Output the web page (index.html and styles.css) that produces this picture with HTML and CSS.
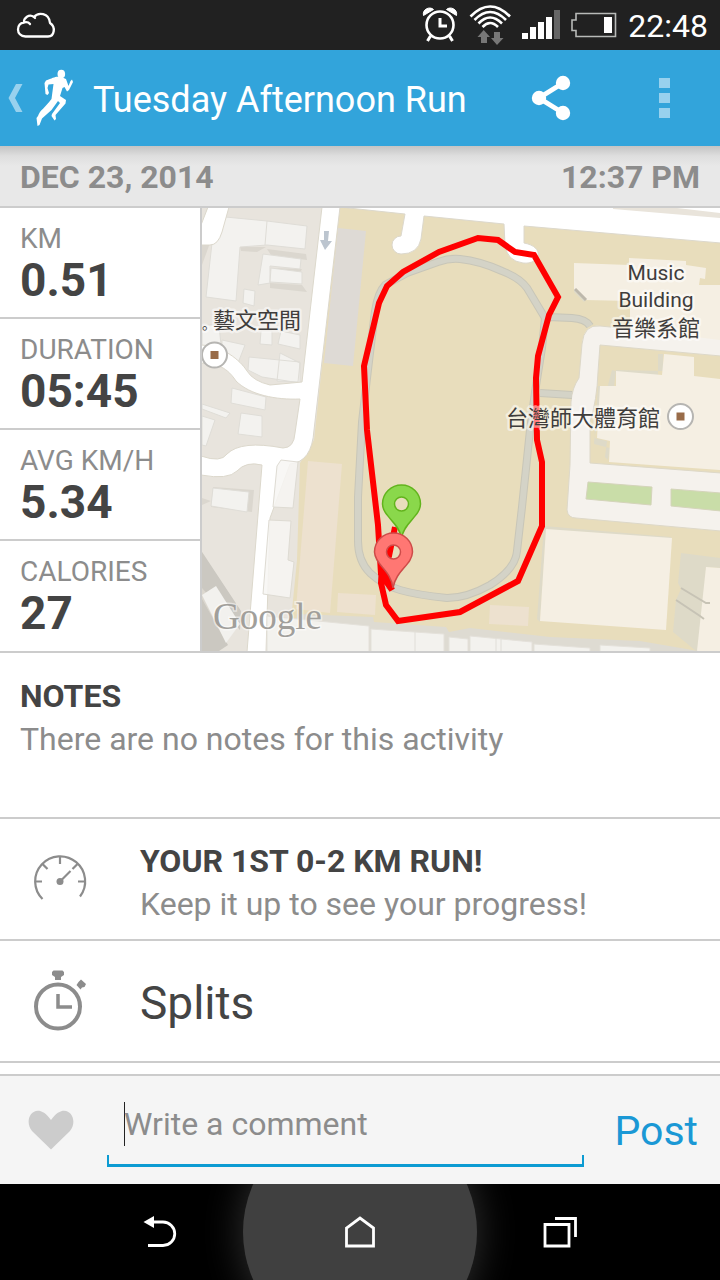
FILE: index.html
```html
<!DOCTYPE html>
<html lang="en">
<head>
<meta charset="utf-8">
<meta name="viewport" content="width=device-width, initial-scale=1">
<title>Tuesday Afternoon Run</title>
<link rel="stylesheet" href="styles.css">
</head>
<body>
<div class="screen">
  <div class="status">
    <svg class="status-cloud" width="40" height="28" viewBox="16 11 40 28" fill="none" stroke="#fff" stroke-width="2.3" stroke-linecap="round" stroke-linejoin="round"><path d="M25.500 36.500C20.500 36.500 18 33 18 29.500C18 25.500 20.500 22.800 24 22.500C23.500 18 29 13.500 34 17C38 12 49 12.500 50 23C56 27 54.500 36.500 48 36.500ZM24 22.500Q28 21.500 30 24M34 17L35 18"/></svg>
    <div class="status-icons">
      <svg width="36" height="38" viewBox="422 6 36 38" fill="none" stroke="#fff"><circle cx="440" cy="25" r="13.500" stroke-width="2.600"/><path d="M440 18V26H447" stroke-width="3"/><path d="M430.500 36L427.500 41M449.500 36L452.500 41" stroke-width="3"/><path d="M423.500 15.500C422 9 430 6 433.500 9.500ZM456.500 15.500C458 9 450 6 446.500 9.500Z" fill="#fff" stroke-width="1"/></svg>
      <svg width="42" height="42" viewBox="468 4 42 42" fill="none" stroke="#fff" stroke-width="2.600"><path d="M469.500 16.500Q489 -3.500 509 16.500M473.500 20Q489 4 505 20M477.500 23.500Q489 11.500 501 23.500M481.500 27Q489 19 497 27"/><path d="M482.700 30L489 37H486V43H480V37H476.500ZM496 45L502.500 38H499V32H493V38H490Z" fill="#777" stroke="none"/></svg>
      <svg width="38" height="30" viewBox="521 12 38 30" fill="#fff"><path d="M521 35H527V41H521ZM529 29H535V41H529ZM537 24H543V41H537ZM545 19H551V41H545Z"/><path d="M553 12H559V41H553Z" fill="#666"/></svg>
      <svg class="status-battery" width="46" height="26" viewBox="572 12 46 26"><path d="M577 13.500H616.500V36.500H577V30.500H573V20H577Z" fill="none" stroke="#b8bab8" stroke-width="1.600"/><path d="M605 17H613V33H605Z" fill="#fff"/></svg>
      <span class="clock">22:48</span>
    </div>
  </div>

  <header class="appbar">
    <button class="up" aria-label="Back">
      <svg width="66" height="60" viewBox="8 68 66 60"><path d="M16 84H22.500L15 98L22.500 112H16L8.500 98Z" fill="#98d1ee"/><g fill="#fff"><ellipse cx="61.300" cy="74" rx="3.800" ry="4.300"/><path d="M59 77C56 76 53 78 46 80.500L44.500 83L45.500 94L47.500 95L49 93L47.500 88L48.500 84.500L53.500 84L51.500 99C45 108 40 110 38 116L36.500 118L37.500 126L39.500 125L42 118.500L51.500 110L58 101L60 103L52 114L51.500 116L54.500 120.500L56 119L55.500 115L65.500 103.500L66 100L60 96L62.500 88L64.500 87L67 91.500L69 90L73 82L72 79.500L70.500 81L68.500 86L66 79L62.500 77.500Z"/></g></svg>
    </button>
    <h1 class="title">Tuesday Afternoon Run</h1>
    <button class="action" aria-label="Share">
      <svg width="40" height="46" viewBox="531 75 40 46" fill="#fff"><path d="M563 83L539 98L563 113" fill="none" stroke="#fff" stroke-width="5"/><circle cx="563" cy="83" r="7.200"/><circle cx="539" cy="98" r="7.200"/><circle cx="563" cy="113" r="7.200"/></svg>
    </button>
    <button class="action more" aria-label="More options"><span></span><span></span><span></span></button>
  </header>

  <main class="content">
    <div class="datebar"><span>DEC 23, 2014</span><span>12:37 PM</span></div>

    <section class="overview">
      <dl class="stats">
        <div class="stat"><dt>KM</dt><dd>0.51</dd></div>
        <div class="stat"><dt>DURATION</dt><dd>05:45</dd></div>
        <div class="stat"><dt>AVG KM/H</dt><dd>5.34</dd></div>
        <div class="stat"><dt>CALORIES</dt><dd>27</dd></div>
      </dl>
      <svg class="map" viewBox="202 208 518 443" preserveAspectRatio="xMidYMid slice" role="img" aria-label="Route map">
        <rect x="202" y="208" width="518" height="443" fill="#e8e4dd"/>
        <!-- campus ground -->
        <path d="M339 208H720V651H370L290 630L297 560L300 463L314 440Z" fill="#e8ddbc"/>
        <path d="M338 228L366 231L353 366L324 363Z" fill="#dedad5"/>
        <path d="M308 461L342 464L330 613L296 609Z" fill="#ede1cf"/>
        <path d="M338 593L376 595L375 615L337 612ZM490 605L529 607L528 626L489 624Z" fill="#ede1cf"/>
        <!-- blocks on the west side -->
        <g fill="#dbd7cf">
          <path d="M202 243L210 243L202 265Z"/>
          <path d="M240 247L266 247L257 252L241 251ZM267 249L306 254L307 260L271 255ZM270 283L302 285L307 292L270 288ZM272 268L302 269L300 273L270 271Z"/>
          <path d="M213 487L254 490L252 512L211 507ZM202 498L211 501L202 505ZM202 552L240 610L241 622L226 642L202 612Z"/>
        </g>
        <path d="M202 552L241 611L240 630L202 588ZM202 599L228 645L219 651H202Z" fill="#cbc8c1"/>
        <g fill="#f3f2ef" stroke="#dfddd7" stroke-width="1">
          <path d="M215 216L267 221L307 226L305 249L267 245L240 247L236 301L206 297Z"/>
          <path d="M267 221L265 245M263 254L301 259L300 269L270 266V283L258 285Z"/>
          <path d="M271 268L302 272V284L270 282ZM244 289L255 291L254 306L243 303Z"/>
          <path d="M202 325H219L222 355L202 351ZM222 340L245 345L238 363L222 353ZM261 331H272V345L260 344ZM281 331L300 335V349L278 344Z"/>
          <path d="M249 357L300 362V383L262 377L248 370ZM280 353L300 363L298 382L277 381Z"/>
          <path d="M232 388L266 397L265 410L231 403ZM202 404L230 413L226 418L202 409ZM241 413L262 416V437L238 434ZM202 416L215 420L206 446L202 445Z"/>
          <path d="M213 488L249 492L247 512L211 506Z"/>
        </g>
        <path d="M202 595L216 586L240 624L226 643Z" fill="#f2f1ee"/>
        <!-- streets -->
        <g fill="#fff" stroke="#dcd8cc" stroke-width="1">
          <path d="M208 207H229L222 232Q218 245 210 245H201V225Z"/>
          <path d="M322 207H340L314 430Q312 462 290 464L270 518L266 652H247L262 465Q246 461 237 471Q228 480 201 475V456Q221 463 227 454Q241 440 283 448Q294 448 295 433L300 399C276 400 250 395 236 381C225 364 213 364 201 363V345C223 346 240 360 247 371Q253 381 270 385L302 382Z"/>
          <path d="M339 207H721V243L524 226V243C546 247 540 265 523 263Q507 261 505 245L504 224L424 216L421 239Q418 254 401 254A9 9 0 0 1 401 236L405 214Z"/>
        </g>
        <path d="M613 208H677L720 213V218L613 209Z" fill="#e9e4db"/>
        <g fill="#f7f6f3" fill-opacity=".85" stroke="#dedbd3">
          <path d="M281 460L298 462L293 508L273 507L277 466ZM269 520L291 521L288 560L294 562L290 598L263 594Z"/>
        </g>
        <g fill="#f5f2ed" stroke="#ddd8c8">
          <path d="M721 338L600 326Q584 324 582 344L579 378Q572 388 571 402L570 465L567 510Q568 518 576 518L721 531V473L590 463V422Q597 400 598 372L600 345L721 356Z"/>
        </g>
        <path d="M588 482L652 487L651 505L586 499ZM671 489L721 493V511L671 506Z" fill="#c9dda8" stroke="#d4d4ba"/>
        <!-- campus buildings -->
        <g fill="#dedac8">
          <path d="M574 289L586 300L584 302L574 292ZM612 370L616 371V391L658 396V354L663 354V371L616 370L614 386L598 386L594 444L610 448L608 460L605 457L607 441L594 438ZM544 526L671 537V541L546 532L540 622L537 619ZM681 553L721 558V568L706 567L704 651H696L673 632L676 600L681 589L678 583Z"/>
        </g>
        <g fill="#f5efe3">
          <path d="M574 263L629 265V258L686 261V265L706 268L705 279L700 278L699 285H721V340L630 329V301L585 300L574 290Z"/>
          <path d="M616 371L662 375L664 354L694 357V376L721 379V470L609 462L610 441L597 438L600 386H616Z"/>
          <path d="M546 529L672 538L666 630L540 621Z"/>
          <path d="M706 567L721 568V651H697Z"/>
        </g>
        <path d="M575 289L586 300" stroke="#bdb8ac" stroke-width="3"/>
        <path d="M681 588L706 603L710 603M676 600L700 616L704 619" fill="none" stroke="#c7c3b5" stroke-width="2"/>
        <!-- south row -->
        <path d="M297 614L373 617L374 622L446 627L449 632L470 628L550 637L640 641L698 651H292Z" fill="#dedbd2"/>
        <path d="M267 616L369 626V652H267ZM371 629L444 634V652H371ZM449 637L468 639V652H449ZM470 636L532 642V652H470ZM534 644L590 648V652H534ZM600 645L650 648V652H600Z" fill="#f3f2ee" stroke="#e4e1da"/>
        <path d="M415 632V651M496 638V651M501 639V651" stroke="#e0ded8"/>
        <!-- running track -->
        <path id="track" class="track-edge" d="M460 259Q449 258 438 262L407 273L385 285Q378 292 375 311L367 378L362 422L358 497V541C358 554 362 565 370 573Q383 585 400 590T447 598Q467 598 490 585C506 575 516 564 517 551L522 507L530 430L535 392L542 348L545 318L527 288Q520 278 502 271Q480 261 460 259ZM548 317L572 318Q586 319 590 326M540 393L572 395"/>
        <path class="track-fill" d="M460 259Q449 258 438 262L407 273L385 285Q378 292 375 311L367 378L362 422L358 497V541C358 554 362 565 370 573Q383 585 400 590T447 598Q467 598 490 585C506 575 516 564 517 551L522 507L530 430L535 392L542 348L545 318L527 288Q520 278 502 271Q480 261 460 259ZM548 317L572 318Q586 319 590 326M540 393L572 395"/>
        <path d="M324 231H329L328 241H332L325 250L320 240H324Z" fill="#bcc5cf"/>
        <!-- recorded route -->
        <path d="M395 527L389 556L382 566L392 590L381 574L378 525L367 430L364 366L379 303L387 286L403 272L439 252L478 238L498 240L515 252L534 255L558 297L549 315L538 356L536 378L537 440L542 462V526L518 581L460 612L398 621L386 605L381 583L382 566" fill="none" stroke="#f00" stroke-width="6"/>
        <!-- places -->
        <g fill="#fff" stroke="#b6b5b2" stroke-width="2"><circle cx="214.500" cy="355" r="12.500"/><circle cx="680.500" cy="416.500" r="12.500"/></g>
        <path d="M210.500 351H218.500V359H210.500ZM676.500 412.500H684.500V420.500H676.500Z" fill="#996c49"/>
        <g class="place">
          <text class="stop" x="202" y="329" lang="ja">。</text>
          <text x="213" y="328">藝文空間</text>
          <text class="latin" x="656" y="280" text-anchor="middle">Music</text>
          <text class="latin" x="656" y="307" text-anchor="middle">Building</text>
          <text x="656" y="336" text-anchor="middle">音樂系館</text>
          <text x="506" y="426">台灣師大體育館</text>
        </g>
        <text class="credit" x="213" y="629">Google</text>
        <!-- start and finish pins -->
        <path d="M401.500 538C399 522 383 517 382.500 504A19 19 0 0 1 420.500 504C420 517 404 522 401.500 538ZM401.500 497A7 7 0 1 0 401.500 511A7 7 0 1 0 401.500 497Z" fill="#8ad84b" stroke="#62b41d" stroke-width="1.500"/>
        <path d="M393 588C391 570 375 565 374.500 552A19 19 0 0 1 412.500 552C412 565 396 570 393 588ZM393.500 545A7 7 0 1 0 393.500 559A7 7 0 1 0 393.500 545Z" fill="#ff7773" stroke="#ce4b49" stroke-width="1.500"/>
      </svg>
    </section>

    <section class="notes">
      <h2>NOTES</h2>
      <p>There are no notes for this activity</p>
    </section>

    <section class="row">
      <svg class="row-icon" width="56" height="64" viewBox="32 848 56 64" fill="none" stroke="#8c8c8c" stroke-width="2.200"><path d="M42.500 900A25 25 0 1 1 80 897.500"/><path d="M35 882.500H42M78 882.500H85M60 857.500V865M42.500 865L47.500 870M77.500 865L72.500 870"/><path d="M60 882.500L70.500 872"/><circle cx="60" cy="882.500" r="3.500" fill="#8c8c8c" stroke="none"/></svg>
      <div class="progress"><h2>YOUR 1ST 0-2 KM RUN!</h2><p>Keep it up to see your progress!</p></div>
    </section>

    <section class="row">
      <svg class="row-icon" width="56" height="64" viewBox="32 969 56 64" fill="none" stroke="#8c8c8c"><circle cx="58" cy="1006.500" r="22" stroke-width="4"/><path d="M58 994V1007H72" stroke-width="3.500"/><path d="M53.500 970.500H62.500L64 972V975L61 977V980H55V977L52 975V972ZM76.500 985L80.500 989.500L82 987.500L84.500 987L86 984L81 979.500L78.500 982Z" fill="#8c8c8c" stroke="none"/></svg>
      <div class="splits">Splits</div>
    </section>
  </main>

  <form class="comment">
    <button type="button" class="like" aria-label="Like"><svg width="48" height="42" viewBox="27 1108 48 42"><path d="M51 1148.500L32 1130C22 1118 36 1098 51 1119C66 1098 80 1118 70 1130Z" fill="#ccc"/></svg></button>
    <div class="field"><input type="text" placeholder="Write a comment" aria-label="Write a comment"></div>
    <button type="button" class="post">Post</button>
  </form>

  <nav class="navbar">
    <button aria-label="Back"><svg width="36" height="36" viewBox="142 1214 36 36"><path d="M150 1222H163A11.500 11.500 0 0 1 163 1245.500H148" fill="none" stroke="#fff" stroke-width="2.800"/><path d="M143.500 1222L154 1216V1228Z" fill="#fff"/></svg></button>
    <button class="home" aria-label="Home"><svg width="36" height="36" viewBox="342 1214 36 36"><path d="M346.500 1228L360 1218L373.500 1228V1246H346.500Z" fill="none" stroke="#fff" stroke-width="2.800"/></svg></button>
    <button aria-label="Recent apps"><svg width="36" height="36" viewBox="542 1214 36 36" fill="none" stroke="#fff" stroke-width="2.800"><path d="M545 1224.500H569V1246H545ZM555 1218.500H575.500V1237"/></svg></button>
  </nav>
</div>
</body>
</html>
```
FILE: styles.css
```css
* { box-sizing: border-box; }
body { margin: 0; font-family: Roboto, "Noto Sans CJK TC", sans-serif; color: #444; background: #fff; }
h1, h2, p, dl, dd { margin: 0; }
button { border: 0; padding: 0; background: none; font: inherit; color: inherit; }
svg { display: block; flex: none; }

.screen { min-height: 100vh; display: flex; flex-direction: column; }

.status { height: 50px; padding: 0 12px 0 16px; display: flex; align-items: center; justify-content: space-between; background: #212121; color: #fff; }
.status-icons { display: flex; align-items: center; gap: 11px; }
.clock { padding-top: 2px; font-size: 32px; line-height: 36px; }

.appbar { height: 96px; padding: 0 30px 0 8px; display: flex; align-items: center; background: #32a4db; color: #fff; }
.up { margin-right: 19px; }
.title { flex: 1; padding-top: 4px; font-size: 36px; line-height: 44px; font-weight: 400; white-space: nowrap; }
.action { width: 52px; display: flex; align-items: center; justify-content: center; }
.more { margin-left: 61px; flex-direction: column; gap: 5px; }
.more span { width: 11px; height: 10px; background: #98d1ee; }

.content { flex: 1; }
.datebar { height: 62px; padding: 2px 20px 0; display: flex; align-items: center; justify-content: space-between; border-bottom: 2px solid #ccc; background: linear-gradient(#c4c4c4, #dedede 10px, #e8e8e8 20px); font-size: 32px; line-height: 40px; font-weight: 700; color: #8c8c8c; }

.overview { display: flex; border-bottom: 2px solid #ccc; }
.stats { width: 202px; flex: none; border-right: 2px solid #ccc; }
.stat { height: 111px; padding: 15px 20px 0; border-bottom: 2px solid #ccc; }
.stat:last-child { height: 110px; border-bottom: 0; }
.stat dt { font-size: 28px; line-height: 32px; color: #8c8c8c; }
.stat dd { font-size: 46px; line-height: 50px; font-weight: 700; }
.map { flex: 1 1 0; min-width: 0; height: 443px; }
.track-edge, .track-fill { fill: none; stroke: #c8c6b8; stroke-width: 8px; }
.track-fill { stroke: #d4d3c7; stroke-width: 6px; }
.place { font-size: 22px; fill: #3f3d3c; stroke: #fff; stroke-opacity: .5; stroke-width: 5px; stroke-linejoin: round; paint-order: stroke; }
.place .latin { font-size: 21px; }
.place .stop { font-family: "Noto Sans CJK JP", sans-serif; font-size: 14px; }
.credit { font: 37px "Liberation Serif", serif; fill: #a19f9b; stroke: #fff; stroke-opacity: .5; stroke-width: 3px; paint-order: stroke; }

h2 { font-size: 32px; line-height: 40px; font-weight: 700; }
p { font-size: 32px; line-height: 46px; color: #8c8c8c; }
.notes { height: 166px; padding: 23px 20px; border-bottom: 2px solid #ccc; }
.row { height: 122px; padding-left: 32px; display: flex; align-items: center; gap: 52px; border-bottom: 2px solid #ccc; }
.progress { padding-top: 10px; }
.splits { padding-top: 4px; font-size: 46px; line-height: 54px; }

.comment { height: 110px; padding: 0 22px 0 27px; display: flex; align-items: center; border-top: 2px solid #ccc; background: #f5f5f5; }
.field { position: relative; flex: 1; margin: 0 30px 0 32px; height: 74px; padding-top: 9px; }
.field::after { content: ""; position: absolute; left: 0; right: 0; bottom: 0; height: 9px; border: solid #0c9bd2; border-width: 0 2px 3px; }
.field input { display: block; width: 100%; height: 44px; padding: 0 17px; border: 0; outline: 0; background: linear-gradient(#222, #222) 17px 0 / 1px 44px no-repeat; font: 32px Roboto, sans-serif; color: #444; }
.field input::placeholder { color: #8c8c8c; opacity: 1; }
.post { padding-top: 2px; font-size: 41px; line-height: 48px; color: #1a98d5; }

.navbar { height: 96px; padding: 0 60px; display: flex; justify-content: center; background: #000; overflow: hidden; }
.navbar button { flex: 0 1 200px; display: flex; align-items: center; justify-content: center; }
.navbar .home { position: relative; }
.home::before { content: ""; position: absolute; width: 234px; height: 234px; left: 50%; top: 50%; margin: -117px; border-radius: 50%; background: #404040; box-shadow: 0 0 40px #333; }
.home svg { position: relative; }
```
